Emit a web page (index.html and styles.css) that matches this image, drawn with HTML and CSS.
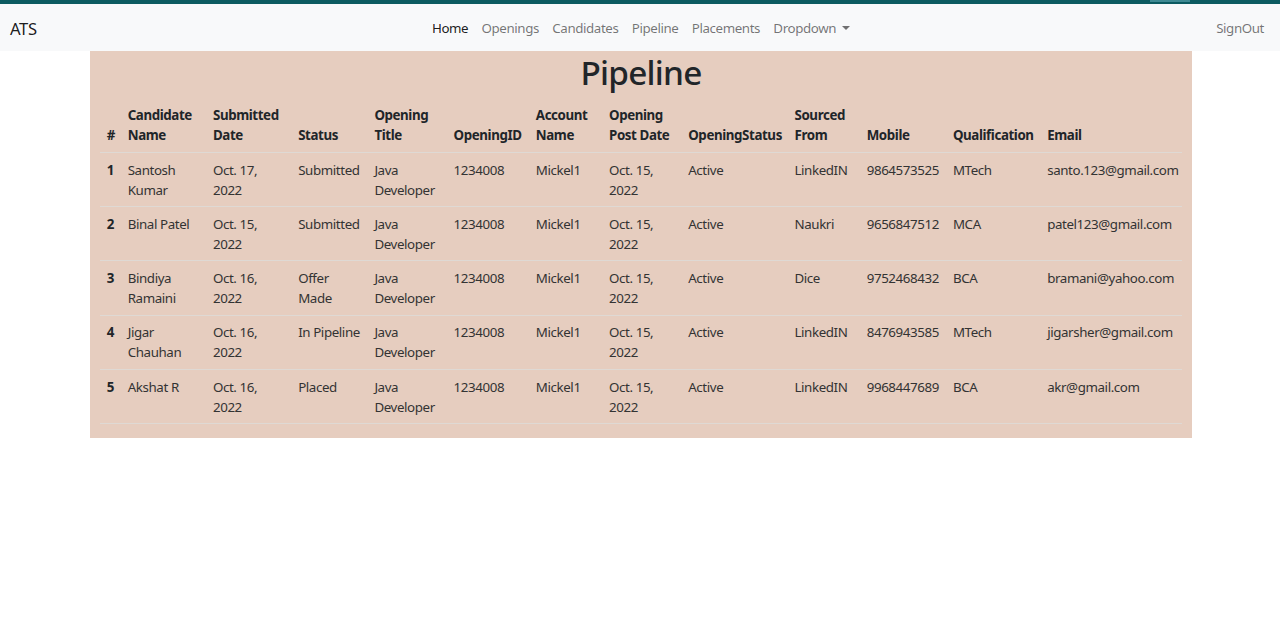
FILE: index.html
```html
<!DOCTYPE html>
<html lang="en">
<head>
<meta charset="utf-8">
<title>ATS - Pipeline</title>
<link rel="stylesheet" href="styles.css">
</head>
<body>
<div class="topstrip"><span class="strip-glow"></span></div>
<nav class="navbar">
  <div class="side side-left"><a class="brand" href="#">ATS</a></div>
  <ul class="nav-links">
    <li><a class="nav-link active" href="#">Home</a></li>
    <li><a class="nav-link" href="#">Openings</a></li>
    <li><a class="nav-link" href="#">Candidates</a></li>
    <li><a class="nav-link" href="#">Pipeline</a></li>
    <li><a class="nav-link" href="#">Placements</a></li>
    <li><a class="nav-link dropdown" href="#">Dropdown<span class="caret"></span></a></li>
  </ul>
  <div class="side side-right"><a class="nav-link signout" href="#">SignOut</a></div>
</nav>
<main class="container">
  <h1 class="title">Pipeline</h1>
  <table class="table">
    <colgroup>
      <col class="c-num"><col class="c-name"><col class="c-date"><col class="c-status"><col class="c-title">
      <col class="c-id"><col class="c-acct"><col class="c-post"><col class="c-ostatus"><col class="c-src">
      <col class="c-mob"><col class="c-qual"><col class="c-email">
    </colgroup>
    <thead>
      <tr>
        <th>#</th><th>Candidate Name</th><th>Submitted Date</th><th>Status</th><th>Opening Title</th>
        <th>OpeningID</th><th>Account Name</th><th>Opening Post Date</th><th>OpeningStatus</th><th>Sourced From</th>
        <th>Mobile</th><th>Qualification</th><th>Email</th>
      </tr>
    </thead>
    <tbody>
      <tr>
        <th>1</th><td>Santosh Kumar</td><td>Oct. 17, 2022</td><td>Submitted</td><td>Java Developer</td>
        <td>1234008</td><td>Mickel1</td><td>Oct. 15, 2022</td><td>Active</td><td>LinkedIN</td>
        <td>9864573525</td><td>MTech</td><td>santo.123@gmail.com</td>
      </tr>
      <tr>
        <th>2</th><td>Binal Patel</td><td>Oct. 15, 2022</td><td>Submitted</td><td>Java Developer</td>
        <td>1234008</td><td>Mickel1</td><td>Oct. 15, 2022</td><td>Active</td><td>Naukri</td>
        <td>9656847512</td><td>MCA</td><td>patel123@gmail.com</td>
      </tr>
      <tr>
        <th>3</th><td>Bindiya Ramaini</td><td>Oct. 16, 2022</td><td>Offer Made</td><td>Java Developer</td>
        <td>1234008</td><td>Mickel1</td><td>Oct. 15, 2022</td><td>Active</td><td>Dice</td>
        <td>9752468432</td><td>BCA</td><td>bramani@yahoo.com</td>
      </tr>
      <tr>
        <th>4</th><td>Jigar Chauhan</td><td>Oct. 16, 2022</td><td>In Pipeline</td><td>Java Developer</td>
        <td>1234008</td><td>Mickel1</td><td>Oct. 15, 2022</td><td>Active</td><td>LinkedIN</td>
        <td>8476943585</td><td>MTech</td><td>jigarsher@gmail.com</td>
      </tr>
      <tr>
        <th>5</th><td>Akshat R</td><td>Oct. 16, 2022</td><td>Placed</td><td>Java Developer</td>
        <td>1234008</td><td>Mickel1</td><td>Oct. 15, 2022</td><td>Active</td><td>LinkedIN</td>
        <td>9968447689</td><td>BCA</td><td>akr@gmail.com</td>
      </tr>
    </tbody>
  </table>
</main>
</body>
</html>
```
FILE: styles.css
```css
* { box-sizing: border-box; }
html, body { margin: 0; padding: 0; }
body {
  font-family: "Noto Sans", "Open Sans", "DejaVu Sans", sans-serif;
  font-size: 13.333px;
  line-height: 1.5;
  letter-spacing: -0.4px;
  color: #212529;
  background: #fff;
}
a { text-decoration: none; }

.topstrip {
  height: 4px;
  background: #0c5b61;
  position: relative;
}
.strip-glow {
  position: absolute;
  left: 1150px;
  top: 0;
  width: 40px;
  height: 2px;
  background: #3f8a93;
}

.navbar {
  height: 47px;
  background: #f8f9fa;
  display: flex;
  align-items: center;
  padding: 2px 10px 0;
  white-space: nowrap;
}
.side {
  flex: 1 1 0;
  display: flex;
}
.side-right { justify-content: flex-end; }
.brand {
  font-size: 16.67px;
  color: rgba(0,0,0,.9);
}
.nav-links {
  list-style: none;
  margin: 0 0 0 2px;
  padding: 0;
  display: flex;
  flex: none;
}
.nav-link {
  display: block;
  padding: 6.67px;
  color: rgba(0,0,0,.55);
}
.nav-link.active { color: rgba(0,0,0,.9); }
.caret {
  display: inline-block;
  margin-left: 6px;
  vertical-align: 2.5px;
  border-top: 4.5px solid;
  border-left: 4px solid transparent;
  border-right: 4px solid transparent;
}
.signout { padding-right: 6px; }

.container {
  width: 1102px;
  margin: 0 0 0 90px;
  padding: 0 10px;
  background: #e6cdbf;
  display: flow-root;
}
.title {
  margin: 0 0 6.67px;
  padding-top: 1px;
  text-align: center;
  font-size: 33.33px;
  font-weight: 500;
  line-height: 1.2;
  letter-spacing: -0.75px;
}
.table {
  width: 100%;
  table-layout: fixed;
  border-collapse: collapse;
  margin-bottom: 13.33px;
}
.table th, .table td {
  padding: 7.67px 6.67px 5.67px;
  text-align: left;
  vertical-align: top;
  border-bottom: 1px solid #dfd9d4;
}
.table thead th {
  vertical-align: bottom;
  font-weight: 700;
}
.table td { color: #333; }
.c-num { width: 21px; }
.c-name { width: 85px; }
.c-date { width: 85px; }
.c-status { width: 76px; }
.c-title { width: 79px; }
.c-id { width: 82px; }
.c-acct { width: 73px; }
.c-post { width: 79px; }
.c-ostatus { width: 106px; }
.c-src { width: 72px; }
.c-mob { width: 86px; }
.c-qual { width: 94px; }
.c-email { width: 141px; }
```
